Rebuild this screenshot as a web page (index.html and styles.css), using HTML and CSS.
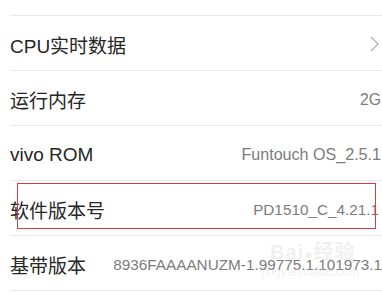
FILE: index.html
```html
<!DOCTYPE html>
<html lang="zh">
<head>
<meta charset="utf-8">
<link rel="stylesheet" href="styles.css">
</head>
<body>
<div class="screen">
  <div class="list">
    <div class="row">
      <span class="label">处理器型号</span>
      <span class="value">MSM8916 &nbsp;8</span>
    </div>
    <div class="row">
      <span class="label">CPU实时数据</span>
      <svg class="chev" width="9" height="16" viewBox="0 0 9 16"><path d="M1 1 L8 8 L1 15" fill="none" stroke="#b4b4b4" stroke-width="1.4"/></svg>
    </div>
    <div class="row">
      <span class="label">运行内存</span>
      <span class="value">2G</span>
    </div>
    <div class="row">
      <span class="label">vivo ROM</span>
      <span class="value wide">Funtouch OS_2.5.1</span>
    </div>
    <div class="row marked">
      <span class="label">软件版本号</span>
      <span class="value narrow">PD1510_C_4.21.1</span>
      <div class="redbox"></div>
    </div>
    <div class="row">
      <span class="label">基带版本</span>
      <span class="value small">8936FAAAANUZM-1.99775.1.101973.1</span>
    </div>
  </div>
  <div class="watermark">
    <div class="wm-top">Bai<span class="paw">●</span>经验</div>
    <div class="wm-url">jingyan.baidu.com</div>
  </div>
</div>
</body>
</html>
```
FILE: styles.css
```css
html, body {
  margin: 0;
  padding: 0;
  background: #ffffff;
}
.screen {
  position: relative;
  width: 382px;
  height: 293px;
  overflow: hidden;
  font-family: "Liberation Sans", "Noto Sans CJK SC", sans-serif;
}
.list {
  margin-top: -39px;
  margin-left: 10px;
}
.row {
  position: relative;
  border-bottom: 1px solid #e9e9e9;
  display: flex;
  align-items: center;
  justify-content: space-between;
  padding-top: 3px;
  height: 51px;
}
.label {
  font-size: 19px;
  color: #262626;
  white-space: nowrap;
}
.value {
  font-size: 15.7px;
  color: #7c7c7c;
  white-space: nowrap;
  margin-right: 1px;
}
.value.wide {
  font-size: 16.1px;
}
.value.narrow {
  font-size: 15.3px;
  margin-right: 3px;
}
.value.small {
  font-size: 15.3px;
  margin-right: 0;
}
.chev {
  margin-right: 3px;
  margin-top: -2px;
}
.redbox {
  position: absolute;
  left: 7px;
  top: 2px;
  width: 357px;
  height: 44px;
  border: 1px solid #e23b3b;
}
.watermark {
  position: absolute;
  left: 262px;
  top: 236px;
  color: rgba(205, 205, 205, 0.3);
  font-family: "Liberation Sans", "Noto Sans CJK SC", sans-serif;
  pointer-events: none;
}
.wm-top {
  font-size: 20px;
  font-weight: bold;
  padding-left: 8px;
  letter-spacing: 1px;
}
.paw {
  font-size: 14px;
}
.wm-url {
  font-size: 12px;
}
```
